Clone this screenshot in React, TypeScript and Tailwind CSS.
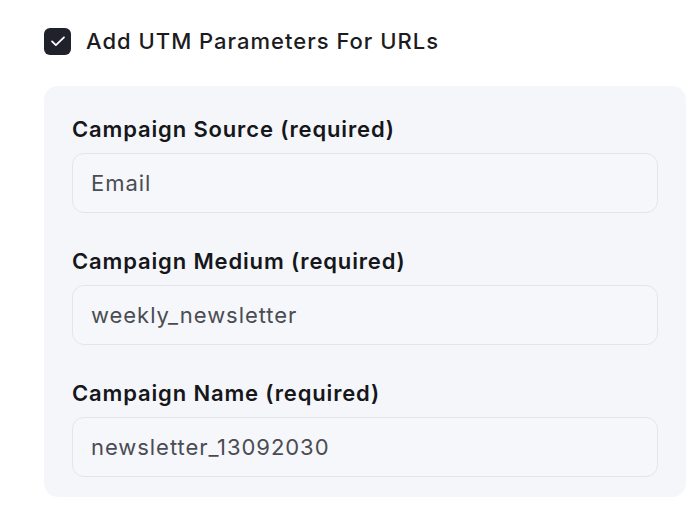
import React from "react";

const fields = [
  { label: "Campaign Source (required)", value: "Email" },
  { label: "Campaign Medium (required)", value: "weekly_newsletter" },
  { label: "Campaign Name (required)", value: "newsletter_13092030" },
];

export default function App() {
  return (
    <div
      className="w-[700px] h-[508px] bg-white pl-[44px] pt-[27px] overflow-hidden"
      style={{ fontFamily: "Inter, 'Noto Sans', sans-serif" }}
    >
      <div className="flex items-center gap-[15px]">
        <div className="w-[27px] h-[27px] rounded-[6px] bg-[#1f222b] flex items-center justify-center">
          <svg width="22" height="22" viewBox="0 0 24 24" fill="none" stroke="white" strokeWidth="2" strokeLinecap="round" strokeLinejoin="round">
            <path d="M5.5 12.5l4.2 4L18.5 8" />
          </svg>
        </div>
        <span className="text-[22px] leading-[28px] font-medium tracking-[1px] text-[#1c1c1f]">Add UTM Parameters For URLs</span>
      </div>
      <div className="mt-[31px] w-[642px] rounded-[14px] bg-[#f5f6fa] px-[28px] pt-[29px] pb-[20px] flex flex-col gap-[34px]">
        {fields.map((f) => (
          <div key={f.label} className="flex flex-col gap-[10px]">
            <div className="text-[22px] leading-[28px] font-semibold tracking-[0.85px] text-[#16171a]">{f.label}</div>
            <div className="h-[60px] rounded-[12px] border border-[#e3e5ea] bg-[#f6f7fa] flex items-center px-[18px]">
              <span className="text-[22px] tracking-[0.95px] text-[#4a4c54]">{f.value}</span>
            </div>
          </div>
        ))}
      </div>
    </div>
  );
}
